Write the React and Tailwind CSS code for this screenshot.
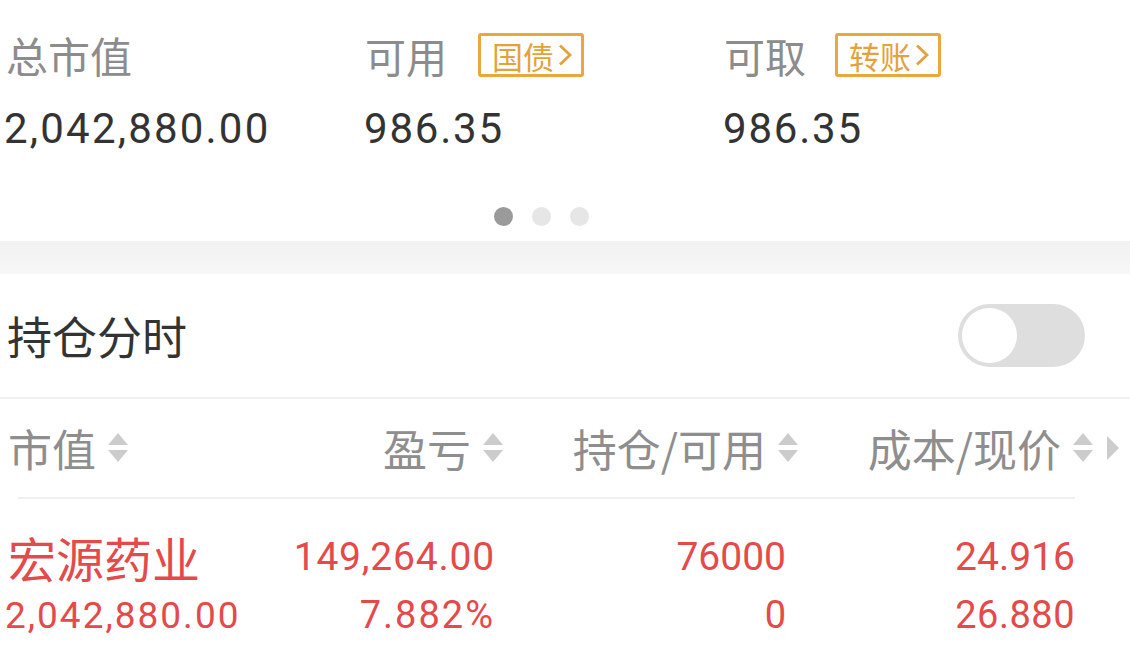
import React from "react";

const CJK = { fontFamily: '"Noto Sans CJK SC", "Noto Sans", sans-serif' };
const NUM = { fontFamily: 'Roboto, "Noto Sans", sans-serif' };

function Chevron() {
  return (
    <svg width="16" height="24" viewBox="0 0 16 24" className="ml-[3px]">
      <polyline points="3,2.5 13,12 3,21.5" fill="none" stroke="#e3a23a" strokeWidth="2.8" strokeLinejoin="miter" />
    </svg>
  );
}

function Badge({ text }) {
  return (
    <div className="flex items-center h-[44px] w-[106px] border-[3px] border-[#e8a83e] rounded-[3px] pl-[11px]">
      <span className="text-[31px] leading-none text-[#e3a23a]" style={CJK}>{text}</span>
      <Chevron />
    </div>
  );
}

function SortIcon() {
  return (
    <svg width="20" height="30" viewBox="0 0 20 30" className="shrink-0">
      <polygon points="10,0 20,12 0,12" fill="#cccccc" />
      <polygon points="0,17 20,17 10,29" fill="#cccccc" />
    </svg>
  );
}

function HeaderCell({ label, className }) {
  return (
    <div className={"flex items-center " + className}>
      <span className="text-[44px] leading-none text-[#8e8e8e]" style={CJK}>{label}</span>
      <span className="ml-[12px] flex items-center"><SortIcon /></span>
    </div>
  );
}

export default function App() {
  return (
    <div className="w-[1130px] h-[658px] bg-white overflow-hidden">
      {/* summary */}
      <div className="pt-[33px]">
        <div className="flex pl-[6px] h-[44px]">
          <div className="w-[359px] flex items-center">
            <span className="text-[42px] leading-none text-[#8c8c8c]" style={CJK}>总市值</span>
          </div>
          <div className="w-[359px] flex items-center">
            <span className="text-[41px] leading-none text-[#8c8c8c]" style={CJK}>可用</span>
            <div className="ml-[31px]"><Badge text="国债" /></div>
          </div>
          <div className="w-[359px] flex items-center">
            <span className="text-[41px] leading-none text-[#8c8c8c]" style={CJK}>可取</span>
            <div className="ml-[29px]"><Badge text="转账" /></div>
          </div>
        </div>
        <div className="flex pl-[4px] mt-[31px] h-[42px]">
          <div className="w-[360px] text-[42px] leading-none text-[#333333] tracking-[2.2px]" style={NUM}>2,042,880.00</div>
          <div className="w-[359px] text-[42px] leading-none text-[#333333] tracking-[1.8px]" style={NUM}>986.35</div>
          <div className="w-[359px] text-[42px] leading-none text-[#333333] tracking-[1.8px]" style={NUM}>986.35</div>
        </div>
        <div className="flex justify-center gap-[19px] mt-[57px] pr-[48px]">
          <div className="w-[19px] h-[19px] rounded-full bg-[#9a9a9a]" />
          <div className="w-[19px] h-[19px] rounded-full bg-[#e6e6e6]" />
          <div className="w-[19px] h-[19px] rounded-full bg-[#e6e6e6]" />
        </div>
        <div className="h-[15px]" />
      </div>

      {/* gray gap */}
      <div className="h-[33px] bg-gradient-to-b from-[#f1f1f1] to-[#f7f7f7]" />

      {/* 持仓分时 */}
      <div className="flex items-center justify-between h-[125px] pl-[7px] pr-[45px] border-b-2 border-[#f0f0f0]">
        <span className="text-[45px] leading-none text-[#333333]" style={CJK}>持仓分时</span>
        <div className="w-[127px] h-[63px] rounded-full bg-[#dedede] flex items-center pl-[4px]">
          <div className="w-[55px] h-[55px] rounded-full bg-white" />
        </div>
      </div>

      {/* header */}
      <div className="flex items-center h-[98px] pl-[8px]">
        <HeaderCell label="市值" className="w-[292px]" />
        <HeaderCell label="盈亏" className="w-[203px] justify-end" />
        <HeaderCell label="持仓/可用" className="w-[295px] justify-end" />
        <HeaderCell label="成本/现价" className="w-[295px] justify-end" />
        <svg width="12" height="24" viewBox="0 0 12 24" className="ml-[14px]">
          <polygon points="0,0 12,12 0,24" fill="#cccccc" />
        </svg>
      </div>
      <div className="mx-[18px] w-[1057px] h-[2px] bg-[#f0f0f0]" />

      {/* data row */}
      <div className="pt-[29px] pl-[8px]">
        <div className="flex items-center h-[58px] text-[#e44a4a]">
          <div className="w-[280px] text-[48px] leading-none whitespace-nowrap" style={CJK}>宏源药业</div>
          <div className="w-[207px] text-right text-[39px] leading-none tracking-[0.8px]" style={NUM}>149,264.00</div>
          <div className="w-[291px] text-right text-[39px] leading-none" style={NUM}>76000</div>
          <div className="w-[289px] text-right text-[39px] leading-none" style={NUM}>24.916</div>
        </div>
        <div className="flex items-center h-[58px] text-[#e44a4a]">
          <div className="w-[292px] text-[37px] leading-none -ml-[3px] tracking-[2px]" style={NUM}>2,042,880.00</div>
          <div className="w-[195px] text-right text-[38px] leading-none ml-[3px] tracking-[2px] -mr-[2px]" style={NUM}>7.882%</div>
          <div className="w-[291px] text-right text-[38px] leading-none ml-[2px]" style={NUM}>0</div>
          <div className="w-[289px] text-right text-[38px] leading-none tracking-[0.5px]" style={NUM}>26.880</div>
        </div>
      </div>
    </div>
  );
}
